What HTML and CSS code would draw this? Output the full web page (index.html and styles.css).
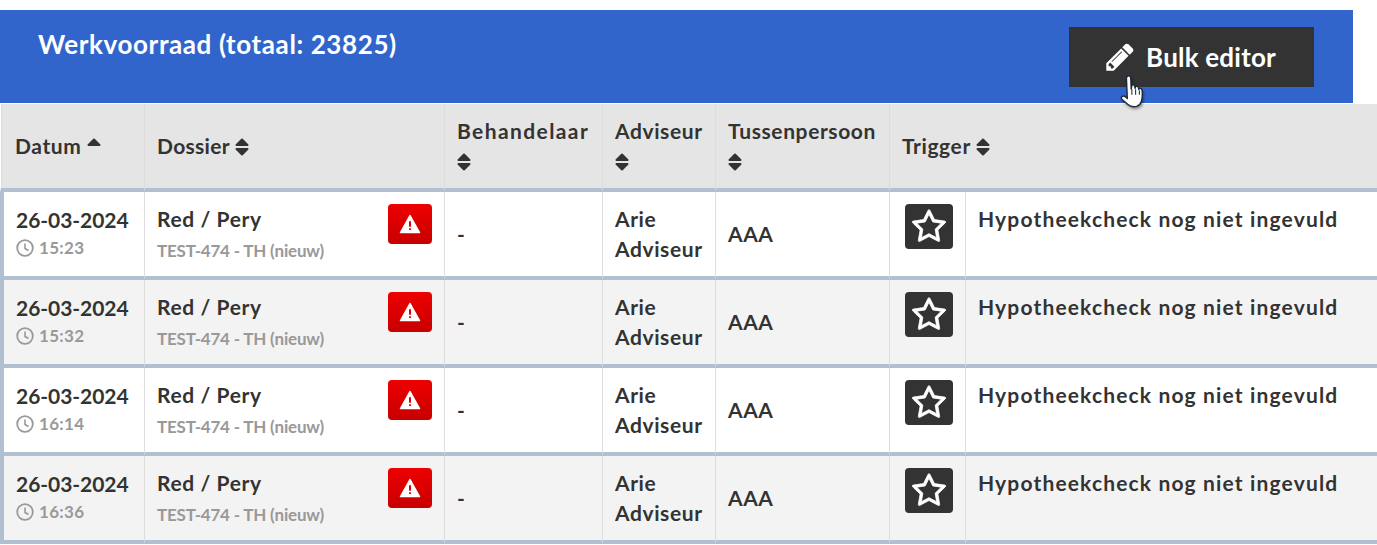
FILE: index.html
```html
<!DOCTYPE html>
<html lang="en">
<head>
  <meta charset="UTF-8">
  <meta name="viewport" content="width=device-width, initial-scale=1.0">
  <title>Werkvoorraad</title>
  <link rel="stylesheet" href="styles.css">
</head>
<body>
  <svg class="icon-defs" width="0" height="0" aria-hidden="true">
    <symbol id="sort" viewBox="0 0 14 20">
      <path d="M1.500 8 7 2.500 12.500 8Z" fill="currentColor" stroke="currentColor" stroke-width="2" stroke-linejoin="round"/>
      <path d="M1.500 12 7 17.500 12.500 12Z" fill="currentColor" stroke="currentColor" stroke-width="2" stroke-linejoin="round"/>
    </symbol>
    <symbol id="sort-up" viewBox="0 0 14 20">
      <path d="M1.500 8 7 2.500 12.500 8Z" fill="currentColor" stroke="currentColor" stroke-width="2" stroke-linejoin="round"/>
    </symbol>
    <symbol id="clock" viewBox="0 0 18 18">
      <circle cx="9" cy="9" r="7.800" fill="none" stroke="currentColor" stroke-width="1.800"/>
      <path d="M9 4.500V9.500L12.500 11.500" fill="none" stroke="currentColor" stroke-width="1.600"/>
    </symbol>
    <symbol id="warning" viewBox="0 0 22 20">
      <path d="M11 1.500 20.500 18.500H1.500Z" fill="#fff" stroke="#fff" stroke-width="1.500" stroke-linejoin="round"/>
      <rect x="10" y="7" width="2" height="6" rx="1" fill="#e00000"/>
      <rect x="10" y="14" width="2" height="2.200" rx="1" fill="#e00000"/>
    </symbol>
    <symbol id="star" viewBox="0 0 1792 1792">
      <path d="M1201 1004l306-297-422-62-189-382-189 382-422 62 306 297-73 421 378-199 377 199zm527-357q0 22-26 48l-363 354 86 500q1 7 1 20 0 50-41 50-19 0-40-12l-449-236-449 236q-22 12-40 12-21 0-31.500-14.500t-10.500-35.500q0-6 2-20l86-500-364-354q-25-27-25-48 0-37 56-46l502-73 225-455q19-41 49-41t49 41l225 455 502 73q56 9 56 46z" fill="#fff" stroke="#fff" stroke-width="40"/>
    </symbol>
  </svg>

  <div class="panel-header">
    <h1>Werkvoorraad (totaal: 23825)</h1>
    <button class="bulk-button" type="button">
      <svg class="bulk-pencil" viewBox="0 0 1792 1792"><path d="M491 1536l91-91-235-235-91 91v107h128v128h107zm523-928q0-22-22-22-10 0-17 7l-542 542q-7 7-7 17 0 22 22 22 10 0 17-7l542-542q7-7 7-17zm-54-192l416 416-832 832h-416v-416zm683 96q0 53-37 90l-166 166-416-416 166-165q36-38 90-38 53 0 91 38l235 234q37 39 37 91z" fill="#fff"/></svg>
      Bulk editor
      <svg class="hand-cursor" viewBox="0 0 26 34">
        <path d="M8 2.500c1.300 0 2 1 2 2.300l.4 10 .6-3.500c1-.8 2.300-.5 2.700.8l.3 2 .5-1.500c1-.7 2.300-.4 2.700.9l.2 1.600.6-.8c1.100-.5 2.300.1 2.500 1.400.4 3.500.3 7-.6 10.300-.7 2.500-2 4-4.500 4.800-3 .8-5.700.2-8-1.700L2 24.500c-1-1-1-2.300 0-3 1-.6 2.300-.3 3.500.8l1.300 1.200L6 5c0-1.500.8-2.500 2-2.500Z" fill="#fff" stroke="#1e2a3a" stroke-width="1.300" stroke-linejoin="round"/>
        <path d="M11 15v5M14.500 15v5M18 16v4" stroke="#1e2a3a" stroke-width="1" fill="none"/>
      </svg>
    </button>
  </div>

  <table class="work-table">
    <colgroup>
      <col class="col-date"><col class="col-dossier"><col class="col-handler"><col class="col-advisor"><col class="col-broker"><col class="col-star"><col>
    </colgroup>
    <thead>
      <tr>
        <th>Datum <svg class="sort-icon"><use href="#sort-up"/></svg></th>
        <th class="tight-label">Dossier <svg class="sort-icon"><use href="#sort"/></svg></th>
        <th class="wide-label">Behandelaar <svg class="sort-icon"><use href="#sort"/></svg></th>
        <th>Adviseur <svg class="sort-icon"><use href="#sort"/></svg></th>
        <th>Tussenpersoon <svg class="sort-icon"><use href="#sort"/></svg></th>
        <th colspan="2">Trigger <svg class="sort-icon"><use href="#sort"/></svg></th>
      </tr>
    </thead>
    <tbody>
      <tr>
        <td><div class="date">26-03-2024</div><div class="time"><svg class="clock-icon"><use href="#clock"/></svg>15:23</div></td>
        <td class="top-cell"><div class="dossier"><div><div class="name">Red / Pery</div><div class="sub">TEST-474 - TH (nieuw)</div></div><span class="alert-badge"><svg><use href="#warning"/></svg></span></div></td>
        <td>-</td>
        <td>Arie Adviseur</td>
        <td>AAA</td>
        <td class="top-cell star-cell"><span class="star-badge"><svg><use href="#star"/></svg></span></td>
        <td class="top-cell trigger-text">Hypotheekcheck nog niet ingevuld</td>
      </tr>
      <tr>
        <td><div class="date">26-03-2024</div><div class="time"><svg class="clock-icon"><use href="#clock"/></svg>15:32</div></td>
        <td class="top-cell"><div class="dossier"><div><div class="name">Red / Pery</div><div class="sub">TEST-474 - TH (nieuw)</div></div><span class="alert-badge"><svg><use href="#warning"/></svg></span></div></td>
        <td>-</td>
        <td>Arie Adviseur</td>
        <td>AAA</td>
        <td class="top-cell star-cell"><span class="star-badge"><svg><use href="#star"/></svg></span></td>
        <td class="top-cell trigger-text">Hypotheekcheck nog niet ingevuld</td>
      </tr>
      <tr>
        <td><div class="date">26-03-2024</div><div class="time"><svg class="clock-icon"><use href="#clock"/></svg>16:14</div></td>
        <td class="top-cell"><div class="dossier"><div><div class="name">Red / Pery</div><div class="sub">TEST-474 - TH (nieuw)</div></div><span class="alert-badge"><svg><use href="#warning"/></svg></span></div></td>
        <td>-</td>
        <td>Arie Adviseur</td>
        <td>AAA</td>
        <td class="top-cell star-cell"><span class="star-badge"><svg><use href="#star"/></svg></span></td>
        <td class="top-cell trigger-text">Hypotheekcheck nog niet ingevuld</td>
      </tr>
      <tr>
        <td><div class="date">26-03-2024</div><div class="time"><svg class="clock-icon"><use href="#clock"/></svg>16:36</div></td>
        <td class="top-cell"><div class="dossier"><div><div class="name">Red / Pery</div><div class="sub">TEST-474 - TH (nieuw)</div></div><span class="alert-badge"><svg><use href="#warning"/></svg></span></div></td>
        <td>-</td>
        <td>Arie Adviseur</td>
        <td>AAA</td>
        <td class="top-cell star-cell"><span class="star-badge"><svg><use href="#star"/></svg></span></td>
        <td class="top-cell trigger-text">Hypotheekcheck nog niet ingevuld</td>
      </tr>
    </tbody>
  </table>
</body>
</html>
```

FILE: styles.css
```css
html, body {
  overflow: hidden;
}
body {
  font-family: 'Lato', 'Liberation Sans', sans-serif;
  font-weight: 700;
  background: #fff;
  margin: 0;
  padding: 10px 0 0;
  color: #333;
}
.icon-defs {
  position: absolute;
}
.panel-header {
  display: flex;
  justify-content: space-between;
  align-items: flex-start;
  box-sizing: border-box;
  width: 1353px;
  height: 93px;
  padding: 17px 39px 0 38px;
  background-color: #3165cc;
}
.panel-header h1 {
  margin: 2px 0 0;
  font-size: 26px;
  line-height: 30px;
  letter-spacing: 0.6px;
  color: #fff;
}
.bulk-button {
  position: relative;
  display: flex;
  align-items: center;
  justify-content: center;
  gap: 10px;
  width: 245px;
  height: 60px;
  padding: 0 3px 0 0;
  border: none;
  background-color: #333;
  color: #fff;
  font-family: inherit;
  font-weight: 700;
  font-size: 26px;
  letter-spacing: 0.2px;
}
.bulk-pencil {
  width: 32px;
  height: 32px;
}
.hand-cursor {
  position: absolute;
  left: 51px;
  top: 46px;
  width: 28px;
  height: 37px;
  filter: drop-shadow(1px 2px 1px rgba(0, 0, 0, 0.35));
}
.work-table {
  width: 1377px;
  margin-top: 1px;
  table-layout: fixed;
  border-collapse: separate;
  border-spacing: 0;
  font-size: 21px;
  letter-spacing: 0.6px;
}
.col-date { width: 144px; }
.col-dossier { width: 300px; }
.col-handler { width: 158px; }
.col-advisor { width: 113px; }
.col-broker { width: 174px; }
.col-star { width: 76px; }
th, td {
  box-sizing: border-box;
  height: 88px;
  padding: 0 12px;
  border-left: 1px solid #ddd;
  border-bottom: 4px solid #b0c0d0;
  line-height: 30px;
  text-align: left;
  vertical-align: middle;
}
th {
  height: 88px;
  background-color: #e5e5e5;
  font-weight: 700;
}
th:first-child {
  padding-left: 14px;
  border-left: 1px solid #fff;
  box-shadow: inset 1px 0 #ddd;
}
th.wide-label {
  letter-spacing: 1.4px;
}
th.tight-label {
  letter-spacing: 0.3px;
}
td:first-child {
  padding-left: 12px;
  border-left: 4px solid #b0c0d0;
}
tbody tr:nth-child(even) td {
  background-color: #f3f3f3;
}
.sort-icon {
  width: 14px;
  height: 20px;
  vertical-align: -3px;
  color: #333;
}
.date {
  line-height: 28px;
  letter-spacing: -0.05px;
}
.time {
  display: flex;
  align-items: center;
  gap: 5px;
  font-size: 17px;
  line-height: 28px;
  letter-spacing: 0.3px;
  color: #999;
}
.clock-icon {
  width: 18px;
  height: 18px;
}
td.top-cell {
  padding-top: 12px;
  vertical-align: top;
}
.dossier {
  display: flex;
  justify-content: space-between;
  align-items: flex-start;
}
.name {
  line-height: 30px;
}
.sub {
  margin-top: 2px;
  font-size: 17px;
  line-height: 30px;
  letter-spacing: -0.2px;
  color: #999;
}
.alert-badge {
  display: flex;
  align-items: center;
  justify-content: center;
  width: 44px;
  height: 40px;
  border-radius: 4px;
  background: linear-gradient(#ee0000, #c80000);
}
.alert-badge svg {
  width: 22px;
  height: 20px;
}
td.star-cell {
  padding-left: 15px;
  padding-right: 0;
}
.star-badge {
  display: flex;
  align-items: center;
  justify-content: center;
  width: 48px;
  height: 45px;
  border-radius: 4px;
  background-color: #333;
}
.star-badge svg {
  width: 36px;
  height: 36px;
}
td.trigger-text {
  padding-top: 12px;
  letter-spacing: 1.15px;
  white-space: nowrap;
}
```
